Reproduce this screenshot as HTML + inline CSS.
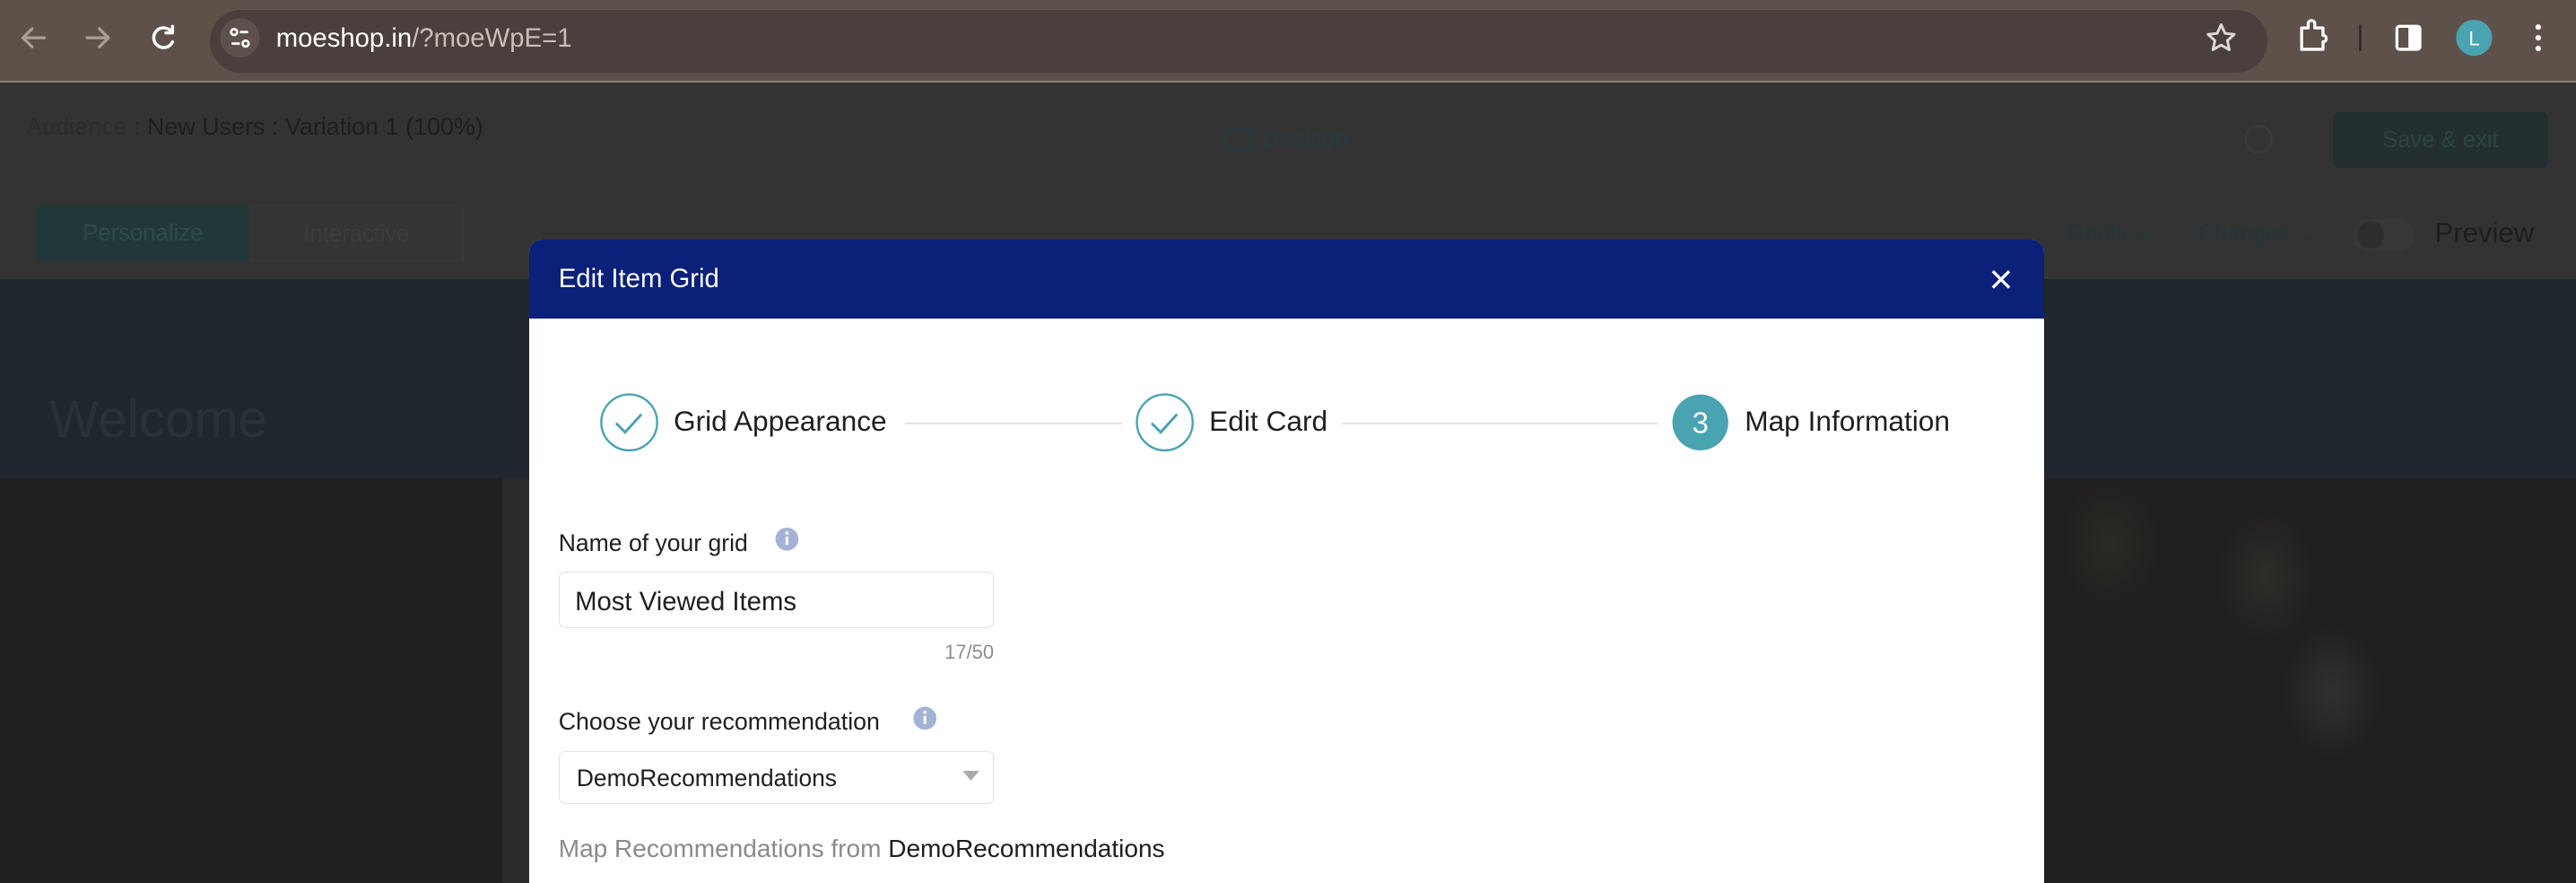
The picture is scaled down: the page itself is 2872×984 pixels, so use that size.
<!DOCTYPE html>
<html><head><meta charset="utf-8"><style>
html,body{margin:0;padding:0;width:2872px;height:984px;overflow:hidden;background:#232222}
#w{zoom:1.83163;width:1568px;height:538px;position:relative;overflow:hidden;font-family:"Liberation Sans",sans-serif}
.a{position:absolute;white-space:nowrap}
</style></head><body><div id="w">
<div class="a" style="left:0;top:0;width:1568px;height:49px;background:#5e5149"></div>
<div class="a" style="left:0;top:49px;width:1568px;height:1px;background:#8a7d74"></div>
<div class="a" style="left:128px;top:6px;width:1252px;height:38px;border-radius:19px;background:#4a3f3c"></div>
<svg class="a" style="left:0;top:0" width="1568" height="50">
<g stroke="#a89e98" stroke-width="1.8" fill="none" stroke-linecap="round" stroke-linejoin="round">
<path d="M27 23H14M19.5 17.5L14 23l5.5 5.5"/><path d="M53 23h13M60.5 17.5L66 23l-5.5 5.5"/></g>
<g stroke="#fff" stroke-width="1.9" fill="none" stroke-linecap="round"><path d="M104.5 19.5A6 6 0 1 0 105 25.5"/><path d="M105 16v4h-4" stroke-linejoin="round"/></g>
<circle cx="146" cy="23" r="12" fill="#5e5149"/>
<g stroke="#fff" stroke-width="1.5" fill="none"><circle cx="142.5" cy="19.5" r="1.8"/><path d="M146 19.5h5"/><circle cx="149.5" cy="26.5" r="1.8"/><path d="M141 26.5h5"/></g>
<path d="M1352 15l2.4 5.3 5.6.6-4.2 3.8 1.2 5.6-5-2.9-5 2.9 1.2-5.6-4.2-3.8 5.6-.6z" stroke="#e0dad6" stroke-width="1.6" fill="none" stroke-linejoin="round"/>
<path d="M1401 17h4v-2.5a2 2 0 0 1 4 0V17h5v4.5a2 2 0 0 1 0 4V30h-13z" stroke="#fff" stroke-width="1.8" fill="none" stroke-linejoin="round"/>
<rect x="1436" y="15" width="1.3" height="16" fill="#2e2624"/>
<rect x="1459" y="16" width="14" height="14" rx="1.5" stroke="#fff" stroke-width="1.8" fill="none"/><rect x="1466" y="16" width="7" height="14" fill="#fff"/>
<circle cx="1506" cy="23" r="11" fill="#4aa3b0"/>
<text x="1506" y="27.5" font-size="12" fill="#fff" text-anchor="middle" font-family="Liberation Sans">L</text>
<g fill="#fff"><circle cx="1545" cy="16.5" r="1.7"/><circle cx="1545" cy="23" r="1.7"/><circle cx="1545" cy="29.5" r="1.7"/></g>
</svg>
<div class="a" style="left:168px;top:14px;font-size:16px;color:#fff">moeshop.in<span style="color:#c9bfb9">/?moeWpE=1</span></div>
<div class="a" style="left:0;top:50px;width:1568px;height:120px;background:#333333"></div>
<div class="a" style="left:16px;top:69px;font-size:14.7px;color:#2a2a2a"><span style="color:#2c2c2c">Audience : </span><span style="color:#1e1e1e">New Users : Variation 1 (100%)</span></div>
<div class="a" style="left:745px;top:78px;width:16px;height:11px;border:1.5px solid #253a3e;border-radius:1px"></div>
<div class="a" style="left:769px;top:77px;font-size:14px;color:#283a3d">Desktop</div>
<div class="a" style="left:1366px;top:76px;width:14px;height:14px;border:2px solid #3a3a3a;border-radius:50%"></div>
<div class="a" style="left:1420px;top:68px;width:131px;height:34px;border-radius:4px;background:#24302f;color:#2d4443;font-size:14px;text-align:center;line-height:34px">Save &amp; exit</div>
<div class="a" style="left:22px;top:125px;width:130px;height:34px;background:#223838;border-radius:3px 0 0 3px;color:#2d4b4b;font-size:14px;text-align:center;line-height:34px">Personalize</div>
<div class="a" style="left:152px;top:125px;width:130px;height:34px;background:#343434;border:1px solid #393939;box-sizing:border-box;color:#3c3c3c;font-size:14px;text-align:center;line-height:34px">Interactive</div>
<div class="a" style="left:1258px;top:134px;font-size:14px;color:#24363a">Goals &#8964;</div>
<div class="a" style="left:1338px;top:134px;font-size:14px;color:#24363a">Changes &#8964;</div>
<div class="a" style="left:1432px;top:133px;width:38px;height:20px;border-radius:10px;background:#373737"></div>
<div class="a" style="left:1435px;top:135px;width:16px;height:16px;border-radius:50%;background:#2d2f2f"></div>
<div class="a" style="left:1482px;top:132px;font-size:17px;color:#1d1d1d">Preview</div>
<div class="a" style="left:0;top:170px;width:1568px;height:121px;background:#1f262e"></div>
<div class="a" style="left:30px;top:237px;font-size:32px;color:#2a3139">Welcome</div>
<div class="a" style="left:1236px;top:200px;font-size:24px;color:#181d23">/</div>
<div class="a" style="left:0;top:291px;width:306px;height:247px;background:#22201f"></div>
<div class="a" style="left:306px;top:291px;width:16px;height:247px;background:#2c2c2c"></div>
<div class="a" style="left:1244px;top:291px;width:324px;height:247px;background:radial-gradient(ellipse 30px 40px at 40px 40px,#2a2923,transparent),radial-gradient(ellipse 30px 40px at 135px 60px,#2d2c28,transparent),radial-gradient(ellipse 30px 40px at 175px 130px,#303030,transparent),#212020"></div>
<div class="a" style="left:322px;top:146px;width:922px;height:400px;background:#fff;border-radius:8px 8px 0 0;overflow:hidden">
<div style="height:48px;background:#0a2079;color:#fff;font-size:16px;line-height:48px;padding-left:18px">Edit Item Grid</div>
</div>
<svg class="a" style="left:0;top:0" width="1568" height="538">
<path d="M1213 165l10 10M1223 165l-10 10" stroke="#fff" stroke-width="1.8"/>
<circle cx="383" cy="257" r="17" fill="none" stroke="#4aa3b0" stroke-width="1.3"/>
<path d="M375 257.5l5.5 5.5 10-11" fill="none" stroke="#4aa3b0" stroke-width="1.6"/>
<circle cx="709" cy="257" r="17" fill="none" stroke="#4aa3b0" stroke-width="1.3"/>
<path d="M701 257.5l5.5 5.5 10-11" fill="none" stroke="#4aa3b0" stroke-width="1.6"/>
<circle cx="1035" cy="257" r="17" fill="#4aa3b0"/>
<text x="1035" y="263.5" font-size="18" fill="#fff" text-anchor="middle" font-family="Liberation Sans">3</text>
<rect x="551" y="257" width="132" height="1.2" fill="#dde0ee"/>
<rect x="817" y="257" width="192" height="1.2" fill="#dde0ee"/>
<circle cx="479" cy="328" r="7" fill="#a3b3d6"/><rect x="478.2" y="326.5" width="1.6" height="5" fill="#fff"/><circle cx="479" cy="324.3" r="1" fill="#fff"/>
<circle cx="563" cy="437" r="7" fill="#a3b3d6"/><rect x="562.2" y="435.5" width="1.6" height="5" fill="#fff"/><circle cx="563" cy="433.3" r="1" fill="#fff"/>
<path d="M586 469h10l-5 6z" fill="#a9a9a9"/>
</svg>
<div class="a" style="left:410px;top:246px;font-size:17.3px;color:#1e1e1e">Grid Appearance</div>
<div class="a" style="left:736px;top:246px;font-size:17.3px;color:#1e1e1e">Edit Card</div>
<div class="a" style="left:1062px;top:246px;font-size:17.3px;color:#1e1e1e">Map Information</div>
<div class="a" style="left:340px;top:322px;font-size:14.5px;color:#1e1e1e">Name of your grid</div>
<div class="a" style="left:340px;top:348px;width:265px;height:34px;border:1px solid #dde1ef;border-radius:4px;box-sizing:border-box"></div>
<div class="a" style="left:350px;top:357px;font-size:16px;color:#1e1e1e">Most Viewed Items</div>
<div class="a" style="left:560px;top:390px;width:45px;text-align:right;font-size:12px;color:#8d8d8d">17/50</div>
<div class="a" style="left:340px;top:431px;font-size:14.6px;color:#1e1e1e">Choose your recommendation</div>
<div class="a" style="left:340px;top:457px;width:265px;height:32px;border:1px solid #dde1ef;border-radius:4px;box-sizing:border-box"></div>
<div class="a" style="left:351px;top:465px;font-size:14.4px;color:#1e1e1e">DemoRecommendations</div>
<div class="a" style="left:340px;top:508px;font-size:15.3px;color:#8a8a8a">Map Recommendations from <span style="color:#1e1e1e">DemoRecommendations</span></div>
</div></body></html>
